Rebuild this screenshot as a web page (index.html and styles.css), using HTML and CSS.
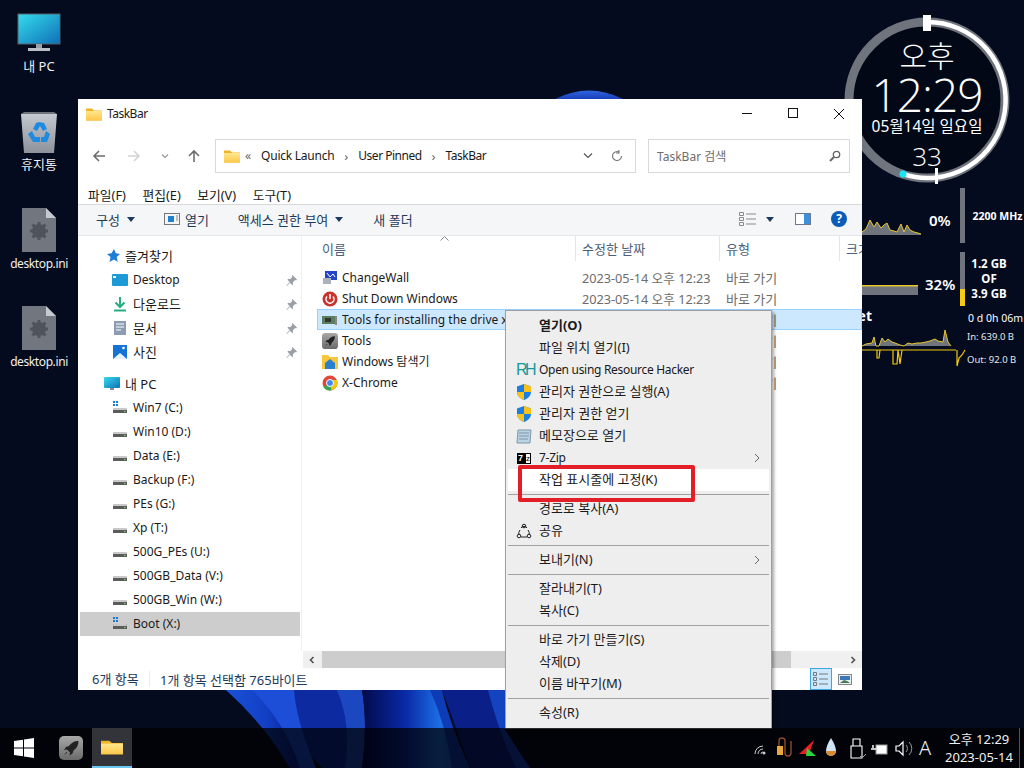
FILE: index.html
```html
<!DOCTYPE html>
<html lang="ko">
<head>
<meta charset="utf-8">
<title>TaskBar</title>
<link rel="stylesheet" href="styles.css">
</head>
<body>
<svg class="defs" width="0" height="0" aria-hidden="true">
  <defs>
    <linearGradient id="fold" x1="0" y1="0" x2="0" y2="1"><stop offset="0" stop-color="#ffe68c"/><stop offset="1" stop-color="#fcc84a"/></linearGradient>
    <linearGradient id="scr" x1="0" y1="0" x2="1" y2="1"><stop offset="0" stop-color="#35dcec"/><stop offset="1" stop-color="#0f6fb8"/></linearGradient>
    <linearGradient id="bin" x1="0" y1="0" x2="0" y2="1"><stop offset="0" stop-color="#c4c8cf"/><stop offset="1" stop-color="#8d929b"/></linearGradient>
    <linearGradient id="rk" x1="0" y1="0" x2="0" y2="1"><stop offset="0" stop-color="#a8a8a8"/><stop offset="1" stop-color="#6a6a6a"/></linearGradient>
    <linearGradient id="dome" x1="0" y1="0" x2="0" y2="1"><stop offset="0" stop-color="#2f66e0"/><stop offset="1" stop-color="#183fb8"/></linearGradient>
    <linearGradient id="w1" x1="0" y1="0" x2="1" y2="0"><stop offset="0" stop-color="#1a52d8"/><stop offset=".55" stop-color="#123fc4"/><stop offset="1" stop-color="#0a1e92"/></linearGradient>
    <linearGradient id="w2" x1="0" y1="0" x2="1" y2="0"><stop offset="0" stop-color="#020a4a"/><stop offset=".45" stop-color="#0a2aa8"/><stop offset=".8" stop-color="#1d6fe6"/><stop offset="1" stop-color="#1554c8"/></linearGradient>
    <symbol id="folder" viewBox="0 0 16 16"><path d="M0 2.500h6l2 2h8v10H0z" fill="#f0b429"/><path d="M0 5h16v9.500H0z" fill="url(#fold)"/></symbol>
    <symbol id="drive" viewBox="0 0 16 16"><path d="M2 8h12l1 2v3H1v-3z" fill="#5c5c5c"/><path d="M2 8h12l1 2H1z" fill="#c9c9c9"/><rect x="12" y="11" width="1.500" height="1" fill="#5fe05f"/></symbol>
    <symbol id="pin" viewBox="0 0 12 12"><path d="M7 0l5 5-1 1-1-.5L7.500 8l.3 2-1 1-2.500-2.500L1 12l-.5-.5 3.500-3.800L1.500 5.200l1-1 2 .3L7 2l-.8-1z" fill="#9aa0a6"/></symbol>
    <symbol id="shield" viewBox="0 0 16 16"><path d="M8 0l7 2.500V8c0 4-3.500 6.800-7 8-3.500-1.200-7-4-7-8V2.500z" fill="#1a7fe0"/><path d="M8 0l7 2.500V8H8zM8 8v8C4.500 14.800 1 12 1 8z" fill="#f7c21c"/></symbol>
    <symbol id="rocket" viewBox="0 0 24 24"><rect width="24" height="24" rx="5" fill="url(#rk)"/><path d="M19 5c-4 0-7 2-9 5l-3 1-2 3 3-.5 3 3-.5 3 3-2 1-3c3-2 5-5 5-9.500z" fill="#222"/><path d="M5 19l2.500-3 .8.8z" fill="#222"/></symbol>
    <symbol id="inifile" viewBox="0 0 36 44"><path d="M1 0h24l10 10v34H1z" fill="#72767f"/><path d="M25 0l10 10H25z" fill="#c5c8cd"/><circle cx="18" cy="23" r="5" fill="none" stroke="#4f535a" stroke-width="4"/><path d="M18 14v18M9 23h18M11.500 16.500l13 13M24.500 16.500l-13 13" stroke="#4f535a" stroke-width="3"/></symbol>
  </defs>
</svg>

<main class="desktop">
  <svg class="wallpaper" viewBox="0 0 1024 768" width="1024" height="768" aria-hidden="true">
    <rect width="1024" height="768" fill="#040b1e"/>
    <path d="M555 99Q589 82 623 99z" fill="url(#dome)"/>
    <path d="M225 690H345L352 768H322Q280 720 225 690z" fill="#0d2aa0"/>
    <path d="M226 690H262Q290 705 300 768H290Q265 725 226 690z" fill="url(#w1)"/>
    <path d="M252 690H294Q296 720 316 768H300Q285 722 252 690z" fill="#1c4ed8"/>
    <path d="M337 690H362Q368 725 362 768H345Q352 725 337 690z" fill="#1b48c0"/>
    <path d="M362 690H440Q448 725 460 768H362Q368 725 362 690z" fill="url(#w2)"/>
    <path d="M430 690H442Q450 725 470 768H452Q446 725 430 690z" fill="#0e3cb6"/>
    <path d="M442 690H490Q495 725 520 768H470Q455 725 442 690z" fill="#0a1f88"/>
    <path d="M488 690H505V730L530 768H516Q498 730 488 690z" fill="#1443c0"/>
  </svg>

  <section class="desk-icons">
    <div class="desk-icon">
      <svg width="44" height="42" viewBox="0 0 44 42"><rect x="1" y="1" width="42" height="30" fill="url(#scr)" stroke="#55606b"/><rect x="19" y="31" width="6" height="5" fill="#9aa0a6"/><rect x="11" y="35" width="22" height="3" fill="#b9bec4"/></svg>
      <span class="k">내 PC</span>
    </div>
    <div class="desk-icon">
      <svg width="38" height="44" viewBox="0 0 38 44"><path d="M1 4h36l-3 39H4z" fill="url(#bin)"/><path d="M1 4l3-2h30l3 2z" fill="#70757d"/><path d="M19 12l5 1 3 6-4 2-3-5-3 5-4-2 3-6zM8 24l4-3 3 6h5v5h-7zM30 24l-4-3-2 6h-3v5h6z" fill="#1e8ae0"/></svg>
      <span class="k">휴지통</span>
    </div>
    <div class="desk-icon">
      <svg width="36" height="44"><use href="#inifile"/></svg>
      <span class="ini">desktop.ini</span>
    </div>
    <div class="desk-icon">
      <svg width="36" height="44"><use href="#inifile"/></svg>
      <span class="ini">desktop.ini</span>
    </div>
  </section>

  <aside class="gadget">
    <svg class="gauge" width="180" height="190" viewBox="0 0 180 190" aria-hidden="true">
      <circle cx="85" cy="100" r="78" fill="#030817" stroke="#70747c" stroke-width="9"/>
      <path d="M85 22A78 78 0 1 1 61 174" fill="none" stroke="#fff" stroke-width="4.500"/>
      <rect x="81" y="15" width="8" height="16" fill="#fff"/>
      <rect x="93" y="168" width="3" height="16" fill="#fff"/>
      <circle cx="61" cy="174" r="3.500" fill="#19e6f5"/>
    </svg>
    <div class="clock-face">
      <div class="ampm">오후</div>
      <div class="time">12:29</div>
      <div class="date">05월14일 일요일</div>
      <div class="secs">33</div>
    </div>
    <svg class="charts" width="162" height="190" viewBox="0 0 162 190" aria-hidden="true">
      <rect x="98" y="8" width="5" height="55" fill="#70747c"/>
      <rect x="98" y="72" width="5" height="37" fill="#70747c"/>
      <rect x="98" y="109" width="5" height="17" fill="#f6cb14"/>
      <path d="M0 52l4-3 4-9 4 7 3-5 4 6 3-3 3-2 3 7 4 1 3 1 4-8 3 8 3-7 3 5 4 2 4 1 3 1v1H0z" fill="#70747c"/>
      <path d="M0 52l4-3 4-9 4 7 3-5 4 6 3-3 3-2 3 7 4 1 3 1 4-8 3 8 3-7 3 5 4 2 4 1 3 1" fill="none" stroke="#e8c62c"/>
      <rect y="106" width="56" height="9" fill="#70747c"/><rect y="105" width="56" height="1.500" fill="#e8c62c"/>
      <path d="M0 166l4-2 6-1 2-6 2 9 3 0 3-8 3 4 3-3 4 3 3 1 5 2 4 1 4-3 4 1 5-1 4 0 5-1 4-1 5-2 3 2 5 1 2-12 3 12 3 4H0z" fill="#70747c"/>
      <path d="M0 166l4-2 6-1 2-6 2 9 3 0 3-8 3 4 3-3 4 3 3 1 5 2 4 1 4-3 4 1 5-1 4 0 5-1 4-1 5-2 3 2 5 1 2-12 3 12 3 4" fill="none" stroke="#e8c62c"/>
      <path d="M0 170h94M15 170v8l2 0 1-8M31 170v14h4l1-14 2 14 2-14M95 170v16l2-8 3-3 3-5" fill="none" stroke="#f2c80f" stroke-width="1.200"/>
    </svg>
    <div class="stat stat-cpu">0%</div>
    <div class="stat stat-mem">32%</div>
    <div class="info info-mhz">2200 MHz</div>
    <div class="info info-mem">1.2 GB<br>OF<br>3.9 GB</div>
    <div class="net-name">Internet</div>
    <div class="uptime">0 d 0h 06m</div>
    <div class="net net-in">In: 639.0 B</div>
    <div class="net net-out">Out: 92.0 B</div>
  </aside>

  <section class="window">
    <header class="titlebar">
      <svg class="ico" width="16" height="16"><use href="#folder"/></svg>
      <span class="title">TaskBar</span>
      <div class="controls">
        <button class="ctl"><svg width="12" height="12" viewBox="0 0 12 12"><path d="M1 5.500h10" stroke="#111"/></svg></button>
        <button class="ctl"><svg width="12" height="12" viewBox="0 0 12 12"><rect x="1.500" y=".5" width="9" height="9" fill="none" stroke="#111"/></svg></button>
        <button class="ctl"><svg width="12" height="12" viewBox="0 0 12 12"><path d="M1 1l10 10M11 1L1 11" stroke="#111"/></svg></button>
      </div>
    </header>

    <div class="navbar">
      <div class="arrows">
        <svg width="14" height="14" viewBox="0 0 14 14"><path d="M13 7H2M7 2L2 7l5 5" fill="none" stroke="#6d6d6d" stroke-width="1.600"/></svg>
        <svg class="ar2" width="14" height="14" viewBox="0 0 14 14"><path d="M1 7h11M7 2l5 5-5 5" fill="none" stroke="#d3d3d3" stroke-width="1.600"/></svg>
        <svg class="ar3" width="8" height="8" viewBox="0 0 8 8"><path d="M1 2.500l3 3 3-3" fill="none" stroke="#a0a0a0" stroke-width="1.300"/></svg>
        <svg class="ar4" width="14" height="14" viewBox="0 0 14 14"><path d="M7 13V2M2 7l5-5 5 5" fill="none" stroke="#6d6d6d" stroke-width="1.600"/></svg>
      </div>
      <div class="address">
        <svg width="16" height="16"><use href="#folder"/></svg>
        <span class="crumb-mark">«</span>
        <span class="crumb c1">Quick Launch</span><span class="chev">›</span>
        <span class="crumb c2">User Pinned</span><span class="chev">›</span>
        <span class="crumb c2">TaskBar</span>
        <svg class="addr-down" width="10" height="8" viewBox="0 0 10 8"><path d="M1 1.500l4 4 4-4" fill="none" stroke="#555" stroke-width="1.200"/></svg>
        <svg class="addr-refresh" width="12" height="12" viewBox="0 0 12 12"><path d="M10.500 6A4.500 4.500 0 1 1 8 2M8 0v3h-3" fill="none" stroke="#777" stroke-width="1.100"/></svg>
      </div>
      <div class="search">
        <span>TaskBar 검색</span>
        <svg width="12" height="12" viewBox="0 0 12 12"><circle cx="7.500" cy="4.500" r="3.200" fill="none" stroke="#666" stroke-width="1.300"/><path d="M5 7l-4 4" stroke="#666" stroke-width="2"/></svg>
      </div>
    </div>

    <nav class="menubar">
      <span>파일(F)</span><span>편집(E)</span><span>보기(V)</span><span>도구(T)</span>
    </nav>

    <div class="toolbar">
      <span class="tool tool-org">구성<i class="caret"></i></span>
      <span class="tool tool-open">
        <svg width="16" height="12" viewBox="0 0 16 12"><rect x=".5" y=".5" width="15" height="11" fill="#f4f4f4" stroke="#777"/><rect x="4" y="3" width="6" height="6" fill="#1f7fd0"/><path d="M12 3h2M12 5h2M12 7h2" stroke="#888"/></svg>
        열기
      </span>
      <span class="tool tool-share">액세스 권한 부여<i class="caret"></i></span>
      <span class="tool tool-new">새 폴더</span>
      <svg class="tb-view" width="18" height="14" viewBox="0 0 18 14"><path d="M.5.5h4v3h-4zM.5 5.500h4v3h-4zM.5 10.500h4v3h-4z" fill="none" stroke="#8a8a8a"/><path d="M7 2h10M7 7h10M7 12h10" stroke="#8a8a8a"/></svg>
      <i class="caret caret-view"></i>
      <svg class="tb-pane" width="16" height="12" viewBox="0 0 16 12"><rect x=".5" y=".5" width="15" height="11" fill="#fff" stroke="#6a7a8c"/><rect x="9" y="1" width="6" height="10" fill="#3d8fe0"/></svg>
      <span class="help">?</span>
    </div>

    <div class="content">
      <div class="tree">
        <div class="tr l1 r-fav"><svg width="14" height="14" viewBox="0 0 14 14"><path d="M8 0l1.800 4.300L14 5l-3.300 3 1 5L8 10.500 3.500 13l1-5L1 5l4.500-.7z" fill="#1f7fd8"/></svg><span class="k">즐겨찾기</span></div>
        <div class="tr l2"><svg width="16" height="12" viewBox="0 0 16 12"><rect width="16" height="12" rx="1" fill="#1d9ad6"/><rect x="1" y="2" width="3" height="2" fill="#fff"/></svg><span>Desktop</span><svg class="pin" width="11" height="11"><use href="#pin"/></svg></div>
        <div class="tr l2"><svg width="16" height="16" viewBox="0 0 16 16"><path d="M8 1v9M3.500 6.500L8 11l4.500-4.500" fill="none" stroke="#27ae80" stroke-width="2"/><path d="M2 14.500h12" stroke="#27ae80" stroke-width="2"/></svg><span class="k">다운로드</span><svg class="pin" width="11" height="11"><use href="#pin"/></svg></div>
        <div class="tr l2"><svg width="16" height="16" viewBox="0 0 16 16"><rect x="2" y="1" width="12" height="14" fill="#8c9cb2"/><path d="M4 4h8M4 7h8M4 10h5" stroke="#fff"/></svg><span class="k">문서</span><svg class="pin" width="11" height="11"><use href="#pin"/></svg></div>
        <div class="tr l2"><svg width="16" height="16" viewBox="0 0 16 16"><rect x="1" y="1" width="14" height="14" fill="#1573d4"/><path d="M1 15l7-6 7 6z" fill="#e8f2fc"/><circle cx="11.500" cy="4" r="1.300" fill="#fff"/></svg><span class="k">사진</span><svg class="pin" width="11" height="11"><use href="#pin"/></svg></div>
        <div class="tr l1 r-pc"><svg width="16" height="16" viewBox="0 0 16 16"><rect y="1" width="16" height="11" rx="1" fill="url(#scr)"/><rect x="6" y="12" width="4" height="2" fill="#889"/></svg><span class="k">내 PC</span></div>
        <div class="tr l2"><svg width="16" height="16" viewBox="0 0 16 16"><use href="#drive"/><path d="M1 1h2v2H1zM4 1h2v2H4zM1 4h2v2H1zM4 4h2v2H4z" fill="#1a78d8"/></svg><span>Win7 (C:)</span></div>
        <div class="tr l2"><svg width="16" height="16"><use href="#drive"/></svg><span>Win10 (D:)</span></div>
        <div class="tr l2"><svg width="16" height="16"><use href="#drive"/></svg><span>Data (E:)</span></div>
        <div class="tr l2"><svg width="16" height="16"><use href="#drive"/></svg><span>Backup (F:)</span></div>
        <div class="tr l2"><svg width="16" height="16"><use href="#drive"/></svg><span>PEs (G:)</span></div>
        <div class="tr l2"><svg width="16" height="16"><use href="#drive"/></svg><span>Xp (T:)</span></div>
        <div class="tr l2"><svg width="16" height="16"><use href="#drive"/></svg><span>500G_PEs (U:)</span></div>
        <div class="tr l2"><svg width="16" height="16"><use href="#drive"/></svg><span>500GB_Data (V:)</span></div>
        <div class="tr l2"><svg width="16" height="16"><use href="#drive"/></svg><span>500GB_Win (W:)</span></div>
        <div class="tr l2 tr-sel"><svg width="16" height="16" viewBox="0 0 16 16"><use href="#drive"/><path d="M1 1h2v2H1zM4 1h2v2H4zM1 4h2v2H1zM4 4h2v2H4z" fill="#1a78d8"/></svg><span>Boot (X:)</span></div>
      </div>
      <div class="list">
        <div class="cols">
          <span class="col c-name">이름</span>
          <span class="col c-date">수정한 날짜</span>
          <span class="col c-type">유형</span>
          <span class="col c-size">크기</span>
          <svg class="sort" width="9" height="5" viewBox="0 0 9 5"><path d="M.5 4.500l4-4 4 4" fill="none" stroke="#8a8a8a"/></svg>
        </div>
        <div class="rows">
          <div class="row"><svg width="16" height="16" viewBox="0 0 16 16"><rect x="3" y="1" width="12" height="9" fill="#2545c8"/><path d="M5 3l3 4 3-3 2 3" stroke="#fff" fill="none"/><path d="M1 8h8v6H1z" fill="#aab2bb"/></svg><span class="c-name">ChangeWall</span><span class="c-date">2023-05-14 오후 12:23</span><span class="c-type">바로 가기</span></div>
          <div class="row"><svg width="16" height="16" viewBox="0 0 16 16"><circle cx="8" cy="8" r="7.500" fill="#c8352e"/><path d="M5 5.500a4 4 0 1 0 6 0" fill="none" stroke="#fff" stroke-width="1.500"/><path d="M8 3v5" stroke="#fff" stroke-width="1.500"/></svg><span class="c-name">Shut Down Windows</span><span class="c-date">2023-05-14 오후 12:23</span><span class="c-type">바로 가기</span></div>
          <div class="row row-sel"><svg width="16" height="16" viewBox="0 0 16 16"><rect y="4" width="13" height="8" fill="#5a7f5e"/><rect x="3" y="6" width="6" height="4" fill="#333"/><path d="M13 4h2v9h-2z" fill="#888"/></svg><span class="c-name">Tools for installing the drive xcopy</span><span class="c-date">2023-05-14 오후 12:23</span><span class="c-type">바로 가기</span></div>
          <div class="row"><svg width="16" height="16"><use href="#rocket"/></svg><span class="c-name">Tools</span><span class="c-date">2023-05-14 오후 12:23</span><span class="c-type">바로 가기</span></div>
          <div class="row"><svg width="16" height="16" viewBox="0 0 16 16"><path d="M0 1h6l2 2h8v12H0z" fill="#f8c63a"/><path d="M8 5l5 4v6H3V9z" fill="#2a7fd0"/></svg><span class="c-name">Windows 탐색기</span><span class="c-date">2023-05-14 오후 12:23</span><span class="c-type">바로 가기</span></div>
          <div class="row"><svg width="16" height="16" viewBox="0 0 16 16"><circle cx="8" cy="8" r="7.500" fill="#e0483a"/><path d="M8 8L1.500 12a7.500 7.500 0 0 0 8 3.300z" fill="#36a852"/><path d="M8 8l1.500 7.300A7.500 7.500 0 0 0 15 5H8z" fill="#f9c513"/><circle cx="8" cy="8" r="3.500" fill="#4285f4" stroke="#fff"/></svg><span class="c-name">X-Chrome</span><span class="c-date">2023-05-14 오후 12:23</span><span class="c-type">바로 가기</span></div>
        </div>
      </div>
    </div>

    <div class="hscroll">
      <svg class="sb-arrow" width="8" height="8" viewBox="0 0 8 8"><path d="M5.500 1L2.500 4l3 3" fill="none" stroke="#505050" stroke-width="1.600"/></svg>
      <div class="thumb"></div>
      <svg class="sb-arrow" width="8" height="8" viewBox="0 0 8 8"><path d="M2.500 1l3 3-3 3" fill="none" stroke="#505050" stroke-width="1.600"/></svg>
    </div>

    <footer class="status">
      <span class="st-count">6개 항목</span>
      <span class="st-sel">1개 항목 선택함 765바이트</span>
      <span class="vw vw-on"><svg width="16" height="14" viewBox="0 0 16 14"><path d="M.5.5h3v3h-3zM.5 5.500h3v3h-3zM.5 10.500h3v3h-3z" fill="none" stroke="#777"/><path d="M6 2h9M6 7h9M6 12h9" stroke="#777"/></svg></span>
      <span class="vw"><svg width="14" height="11" viewBox="0 0 14 11"><rect x=".5" y=".5" width="13" height="10" fill="#e8eef4" stroke="#888"/><rect x="2" y="2" width="10" height="4" fill="#3c78b8"/><path d="M2 9l4-3 3 1 3 2z" fill="#4c7a50"/></svg></span>
    </footer>
  </section>

  <section class="menu">
    <div class="mi mi-bold"><span>열기(O)</span></div>
    <div class="mi"><span>파일 위치 열기(I)</span></div>
    <div class="mi"><b class="rh">RH</b><span class="mi-en">Open using Resource Hacker</span></div>
    <div class="mi"><svg class="mi-ico" width="16" height="16"><use href="#shield"/></svg><span>관리자 권한으로 실행(A)</span></div>
    <div class="mi"><svg class="mi-ico" width="16" height="16"><use href="#shield"/></svg><span>관리자 권한 얻기</span></div>
    <div class="mi"><svg class="mi-ico" width="16" height="16" viewBox="0 0 16 16"><path d="M2 2h13l-1 13H1z" fill="#b9d2e4" stroke="#7f97a8"/><path d="M3 5h10M3 8h10M3 11h9" stroke="#7f97a8"/></svg><span>메모장으로 열기</span></div>
    <div class="mi"><span class="sz"><b>7</b><i>z</i></span><span class="mi-en">7-Zip</span><svg class="sub" width="6" height="10" viewBox="0 0 6 10"><path d="M1 1l4 4-4 4" fill="none" stroke="#666"/></svg></div>
    <div class="mi mi-hot"><span>작업 표시줄에 고정(K)</span></div>
    <div class="sep"></div>
    <div class="mi"><span>경로로 복사(A)</span></div>
    <div class="mi"><svg class="mi-ico" width="16" height="16" viewBox="0 0 16 16"><path d="M5 5a3.500 3.500 0 0 1 6 0M3 12a5 5 0 0 1 1-5M13 12a5 5 0 0 0-1-5M5 14h6" fill="none" stroke="#222"/><circle cx="8" cy="3" r="1.800" fill="none" stroke="#222"/><circle cx="3" cy="13" r="1.800" fill="none" stroke="#222"/><circle cx="13" cy="13" r="1.800" fill="none" stroke="#222"/></svg><span>공유</span></div>
    <div class="sep"></div>
    <div class="mi"><span>보내기(N)</span><svg class="sub" width="6" height="10" viewBox="0 0 6 10"><path d="M1 1l4 4-4 4" fill="none" stroke="#666"/></svg></div>
    <div class="sep"></div>
    <div class="mi"><span>잘라내기(T)</span></div>
    <div class="mi"><span>복사(C)</span></div>
    <div class="sep"></div>
    <div class="mi"><span>바로 가기 만들기(S)</span></div>
    <div class="mi"><span>삭제(D)</span></div>
    <div class="mi"><span>이름 바꾸기(M)</span></div>
    <div class="sep"></div>
    <div class="mi"><span>속성(R)</span></div>
  </section>
  <div class="callout"></div>

  <footer class="taskbar">
    <svg class="start" width="20" height="20" viewBox="0 0 20 20"><path d="M0 3l9-1.300V9.500H0zM10 1.500L20 0v9.500H10zM0 10.500h9v7.800L0 17zM10 10.500h10V20l-10-1.500z" fill="#fff"/></svg>
    <svg class="tb-rocket" width="24" height="24"><use href="#rocket"/></svg>
    <div class="tb-active"><svg width="22" height="18" viewBox="0 0 16 16" preserveAspectRatio="none"><use href="#folder"/></svg></div>
    <svg class="tray" width="164" height="24" viewBox="0 0 164 24" aria-hidden="true">
      <path d="M5 18a8 8 0 0 1 8-8M8 18a5 5 0 0 1 5-5M11 18a2 2 0 0 1 2-2" fill="none" stroke="#ccc"/><circle cx="14" cy="17" r="1.500" fill="#ccc"/>
      <rect x="27" y="10" width="6" height="9" fill="#e8a63c"/><path d="M29 10V5a3 3 0 0 1 6 0v12a3 3 0 0 0 6 0V5" fill="none" stroke="#8a4a30" stroke-width="1.400"/>
      <path d="M49 18L64 4l-5 14z" fill="#ea1c24"/><path d="M57 12l9 8H56z" fill="#26d63c"/>
      <path d="M81 2q-5 8-5 13a5 5 0 0 0 10 0q0-5-5-13z" fill="#cfe4f4"/><path d="M76 15a5 5 0 0 0 10 0z" fill="#d88a2c"/>
      <path d="M101 10h11v12h-11zM103 3h7v7h-7z" fill="none" stroke="#fff" stroke-width="1.100"/><path d="M110 20l2 2 4-4" fill="none" stroke="#aaa"/>
      <rect x="126" y="9" width="11" height="9" fill="#fff" stroke="#999"/><path d="M121 13h5M123 9v3" stroke="#fff" stroke-width="1.500" fill="none"/>
      <path d="M146 10h3l4-4v13l-4-4h-3z" fill="none" stroke="#fff" stroke-width="1.200"/><path d="M156 9a5 5 0 0 1 0 7M159 6a9 9 0 0 1 0 13" fill="none" stroke="#999"/>
    </svg>
    <span class="ime">A</span>
    <div class="tray-clock"><span>오후 12:29</span><span>2023-05-14</span></div>
    <i class="show-desktop"></i>
  </footer>
</main>
</body>
</html>
```

FILE: styles.css
```css
* { box-sizing: border-box; }
html, body { margin: 0; padding: 0; }
body {
  width: 1024px;
  height: 768px;
  overflow: hidden;
  font-family: "Noto Sans", "Noto Sans CJK KR", sans-serif;
  font-size: 12px;
  color: #1a1a1a;
}
.defs { position: absolute; }
.desktop { position: relative; width: 1024px; height: 768px; overflow: hidden; background: #040b1e; }
.wallpaper { position: absolute; left: 0; top: 0; }
.k { font-size: 13px; }

/* desktop icons */
.desk-icons { position: absolute; left: 0; top: 0; width: 78px; display: flex; flex-direction: column; }
.desk-icon { height: 98px; padding-top: 12px; display: flex; flex-direction: column; align-items: center; color: #f0f0f0; }
.desk-icon svg { height: 44px; }
.desk-icon span { margin-top: 0; line-height: 20px; }
.desk-icon .ini { letter-spacing: -.4px; margin-top: 2px; }

/* gadget */
.gadget { position: absolute; left: 842px; top: 0; width: 182px; height: 380px; color: #fff; }
.gauge { position: absolute; left: 0; top: 0; }
.clock-face { position: absolute; left: 15px; top: 37px; width: 140px; display: flex; flex-direction: column; align-items: center; }
.ampm { font-size: 30px; line-height: 38px; font-weight: 300; }
.time { font-size: 46px; line-height: 42px; font-weight: 300; font-family: "Open Sans", "Noto Sans", sans-serif; letter-spacing: -1px; margin-top: -2px; }
.date { font-size: 15.500px; line-height: 22px; margin-top: 0; white-space: nowrap; }
.secs { font-size: 26px; line-height: 30px; margin-top: 4px; font-weight: 300; font-family: "Open Sans", "Noto Sans", sans-serif; }
.charts { position: absolute; left: 20px; top: 180px; }
.stat { position: absolute; font-size: 15px; font-weight: 600; line-height: 20px; }
.stat-cpu { left: 87px; top: 210px; }
.stat-mem { left: 83px; top: 274px; }
.info { position: absolute; font-size: 10.500px; font-weight: 700; text-align: center; }
.info-mhz { left: 129px; top: 209px; width: 53px; line-height: 14px; white-space: nowrap; }
.info-mem { left: 122px; top: 256px; width: 50px; line-height: 15px; font-size: 11.500px; }
.net-name { position: absolute; right: 152px; top: 306px; font-size: 14px; font-weight: 700; line-height: 20px; }
.uptime { position: absolute; left: 126px; top: 311px; font-size: 10.500px; line-height: 14px; white-space: nowrap; }
.net { position: absolute; left: 125px; font-size: 9.500px; line-height: 12px; color: #e8e8e8; white-space: nowrap; }
.net-in { top: 331px; }
.net-out { top: 354px; }

/* window */
.window { position: absolute; left: 78px; top: 99px; width: 784px; height: 591px; background: #fff; display: flex; flex-direction: column; }
.titlebar { height: 30px; flex: none; display: flex; align-items: center; padding-left: 8px; }
.title { margin-left: 5px; padding-bottom: 2px; letter-spacing: -.5px; }
.controls { margin-left: auto; display: flex; align-self: flex-start; }
.ctl { width: 46px; height: 30px; border: 0; background: none; padding: 0; display: flex; align-items: center; justify-content: center; }

.navbar { height: 56px; flex: none; display: flex; align-items: flex-start; padding-top: 10px; }
.arrows { width: 137px; height: 34px; padding-left: 14px; display: flex; align-items: center; flex: none; }
.ar2 { margin-left: 21px; }
.ar3 { margin-left: 20px; }
.ar4 { margin-left: 18px; }
.address { width: 421px; height: 34px; flex: none; border: 1px solid #d9d9d9; display: flex; align-items: center; padding-left: 8px; color: #1a1a1a; }
.address .crumb { padding-bottom: 2px; }
.crumb-mark { margin: -2px 10px 0 5px; color: #666; }
.c1 { letter-spacing: -.25px; }
.c2 { letter-spacing: -.5px; }
.chev { margin: 0 10px; color: #666; font-size: 13px; line-height: 14px; }
.addr-down { margin-left: auto; }
.addr-refresh { margin: 0 12px 0 18px; }
.search { width: 202px; height: 34px; flex: none; margin-left: 12px; border: 1px solid #d9d9d9; display: flex; align-items: center; justify-content: space-between; padding: 0 8px; color: #6d6d6d; }

.menubar { height: 20px; flex: none; display: flex; padding-left: 10px; gap: 16.500px; font-size: 12.800px; line-height: 20px; border-bottom: 1px solid #d9d9d9; }
.toolbar { height: 31px; flex: none; padding-bottom: 2px; background: #f5f6f7; border-bottom: 1px solid #e8e8e8; display: flex; align-items: center; color: #1e3a5a; font-size: 13px; position: relative; }
.tool { display: flex; align-items: center; white-space: nowrap; }
.tool-org { margin-left: 18px; }
.tool-open { margin-left: 29px; gap: 5px; }
.tool-share { margin-left: 29px; }
.tool-new { margin-left: 30px; }
.caret { display: inline-block; width: 0; height: 0; margin-left: 7px; border: 4px solid transparent; border-top: 5px solid #1e3a5a; border-bottom: 0; }
.tb-view { margin-left: auto; }
.caret-view { margin-left: 9px; }
.tb-pane { margin-left: 21px; }
.help { width: 16px; height: 16px; margin: 0 15px 0 20px; border-radius: 50%; background: #0a5cb8; color: #fff; font-weight: 700; font-size: 12px; line-height: 16px; text-align: center; }

.content { flex: 1; display: flex; min-height: 0; }
.tree { width: 224px; flex: none; padding: 8px 0 0 2px; border-right: 1px solid #f0f0f0; }
.tr { height: 24px; width: 220px; display: flex; align-items: center; gap: 5px; white-space: nowrap; }
.tr span { padding-bottom: 2px; }
.tr .k { padding-bottom: 2px; }
.l1 { padding-left: 24px; }
.l2 { padding-left: 32px; }
.r-fav { padding-left: 26px; }
.r-pc { margin-top: 8px; }
.pin { margin-left: auto; margin-right: 3px; }
.tr-sel { background: #cdcdcd; }
.list { flex: 1; min-width: 0; overflow: hidden; }
.cols { height: 25px; display: flex; align-items: center; position: relative; color: #4c607a; padding-left: 20px; font-size: 13px; }
.cols .c-name { width: 254px; }
.col { height: 25px; line-height: 26px; flex: none; border-right: 1px solid #e5e5e5; white-space: nowrap; }
.cols .c-date { width: 144px; padding-left: 6px; }
.cols .c-type { width: 120px; padding-left: 6px; }
.cols .c-size { width: 40px; padding-left: 6px; border-right: 0; }
.sort { position: absolute; left: 138px; top: 0; }
.rows { padding: 6px 0 0 15px; }
.row { height: 21px; display: flex; align-items: center; white-space: nowrap; padding-left: 5px; }
.row svg { flex: none; margin-right: 4px; }
.row .c-name { width: 240px; color: #1a1a1a; overflow: hidden; padding-bottom: 1px; }
.row .c-date { width: 144px; color: #6d6d6d; font-size: 12.700px; }
.row .c-type { color: #6d6d6d; font-size: 13px; }
.row-sel { background: #cce8ff; box-shadow: inset 0 0 0 1px #99d1ff; }

.hscroll { height: 17px; flex: none; margin-left: 225px; background: #f0f0f0; display: flex; align-items: center; padding: 0 5px; }
.thumb { flex: 1; height: 17px; margin: 0 58px 0 6px; background: #cdcdcd; }
.status { height: 22px; flex: none; display: flex; align-items: center; padding-left: 14px; color: #1e3a5a; font-size: 13px; }
.st-count { width: 58px; border-right: 1px solid #ececec; line-height: 16px; }
.st-sel { margin-left: 10px; white-space: nowrap; }
.vw { width: 22px; height: 22px; display: flex; align-items: center; justify-content: center; }
.vw-on { margin-left: auto; background: #cce8ff; border: 1px solid #3fa5e0; }
.vw:last-child { margin: 0 6px 0 2px; }

/* context menu */
.menu { position: absolute; left: 505px; top: 310px; width: 267px; padding: 4px 2px; background: #eeeeee; border: 1px solid #a0a0a0; box-shadow: 2px 2px 3px rgba(0,0,0,.35); color: #1a1a1a; font-size: 13px; }
.mi { height: 22px; display: flex; align-items: center; position: relative; padding-left: 31px; white-space: nowrap; }
.mi > span { padding-bottom: 4px; }
.mi-bold { font-weight: 700; }
.mi-hot { background: #fff; }
.mi .mi-en { font-size: 12px; letter-spacing: -.3px; padding-bottom: 2px; }
.mi-ico { position: absolute; left: 8px; top: 3px; }
.sub { position: absolute; right: 9px; top: 6px; }
.sep { height: 1px; margin: 3px 0; background: #a0a0a0; }
.rh { position: absolute; left: 8px; top: 0; width: 16px; font-size: 16px; font-weight: 400; line-height: 22px; color: #159a9c; letter-spacing: -2.500px; font-family: "Liberation Sans", sans-serif; }
.mi .sz { position: absolute; left: 9px; top: 6px; width: 14px; height: 11px; padding: 0; background: #000; color: #fff; font-size: 9px; line-height: 11px; display: flex; justify-content: space-between; font-family: "Liberation Sans", sans-serif; }
.sz b { width: 7px; text-align: center; }
.sz i { font-style: normal; background: #fff; color: #000; width: 6px; text-align: center; border: 1px solid #000; line-height: 9px; font-size: 8px; }
.callout { position: absolute; left: 518px; top: 465px; width: 177px; height: 37px; border: 4px solid #e41e26; border-radius: 2px; }

/* taskbar */
.taskbar { position: absolute; left: 0; right: 0; bottom: 0; height: 40px; background: rgba(0,0,0,.72); display: flex; align-items: center; color: #f0f0f0; }
.start { margin-left: 14px; flex: none; }
.tb-rocket { margin-left: 25px; flex: none; }
.tb-active { margin-left: 9px; width: 40px; height: 40px; background: #33343a; border-bottom: 2px solid #6cc6f2; display: flex; align-items: center; justify-content: center; }
.tray { margin-left: auto; flex: none; }
.ime { margin-left: 5px; font-size: 20px; line-height: 24px; width: 20px; font-weight: 300; }
.tray-clock { margin-left: 5px; width: 70px; display: flex; flex-direction: column; align-items: center; line-height: 18px; font-size: 13px; white-space: nowrap; }
.show-desktop { margin-left: 5px; margin-right: 4px; width: 1px; height: 40px; background: #555; }
```
